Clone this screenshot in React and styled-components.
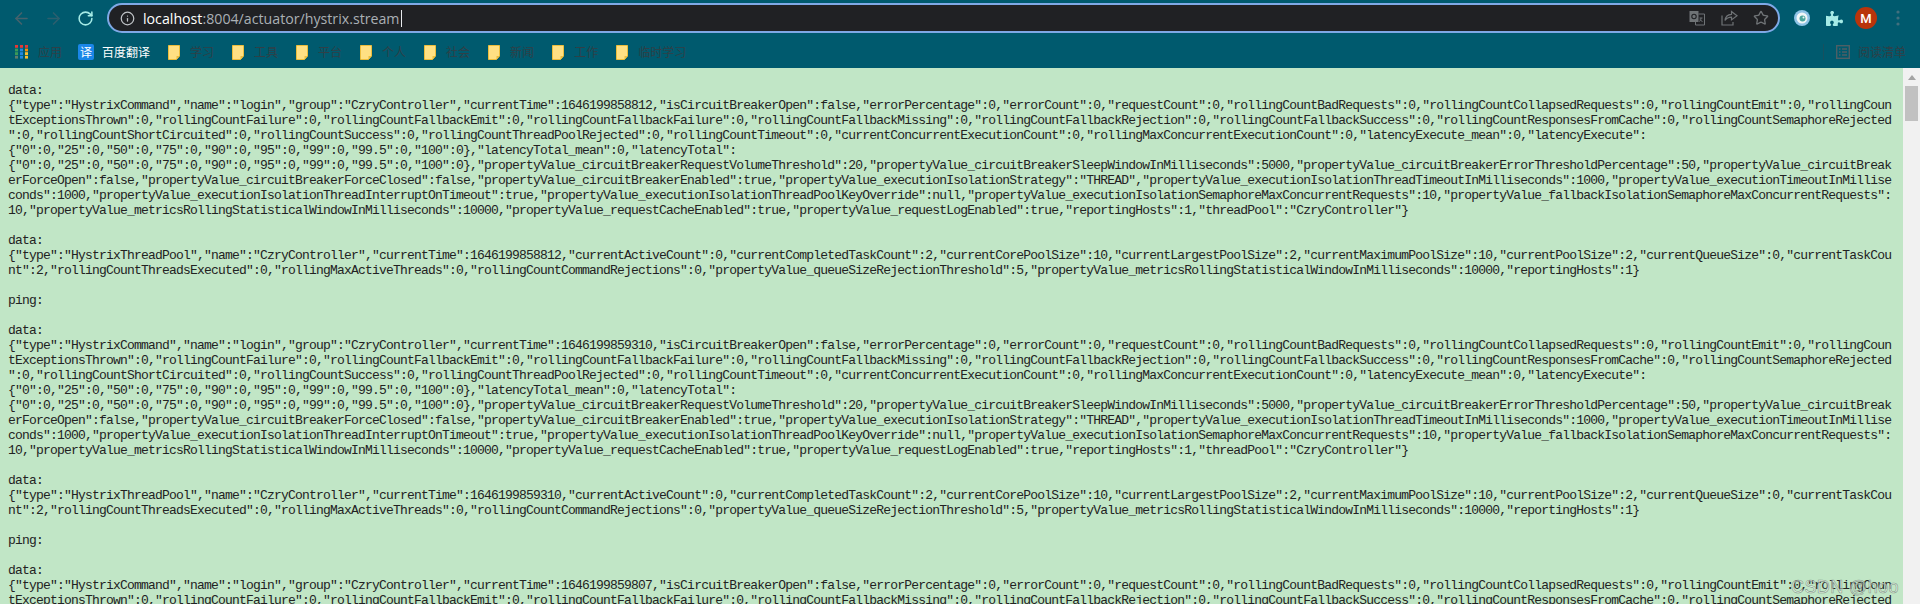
import styled, { createGlobalStyle } from 'styled-components';
import { ArrowLeft, ArrowRight, RotateCw, Info, Star } from 'lucide-react';
import { FaPuzzlePiece } from 'react-icons/fa';

const GlobalStyle = createGlobalStyle`
  html, body {
    margin: 0;
    padding: 0;
    overflow: hidden;
    background: #c1e6c6;
  }
`;

const Page = styled.div`
  position: relative;
  display: flex;
  flex-direction: column;
  width: 1920px;
  height: 604px;
  overflow: hidden;
`;

const Toolbar = styled.header`
  display: flex;
  flex-direction: column;
  flex: none;
  height: 68px;
  background: #005a6e;
`;

const NavRow = styled.div`
  display: flex;
  align-items: center;
  height: 36px;
  padding-left: 5px;
`;

const NavButton = styled.div`
  display: flex;
  align-items: center;
  justify-content: center;
  flex: none;
  width: 32px;
  height: 32px;
  color: ${(p) => p.$color};
`;

const Omnibox = styled.div`
  display: flex;
  align-items: center;
  flex: none;
  box-sizing: border-box;
  width: 1673px;
  height: 30px;
  margin: 0 6px;
  padding: 0 8px 0 11px;
  border: 2px solid #7fa9e6;
  border-radius: 15px;
  background: #202124;
`;

const Url = styled.div`
  flex: 1;
  margin-left: 8px;
  font-family: 'Open Sans', sans-serif;
  font-size: 14.2px;
  color: #aab0b5;
  white-space: pre;
`;

const Host = styled.span`
  color: #fff;
`;

const Caret = styled.span`
  display: inline-block;
  width: 1px;
  height: 17px;
  margin-left: 1px;
  vertical-align: -3px;
  background: #e8eaed;
`;

const OmniActions = styled.div`
  display: flex;
  align-items: center;
  gap: 14px;
  color: #6f7376;
`;

const OmniAction = styled.div`
  display: flex;
  align-items: center;
  justify-content: center;
  width: 18px;
  height: 18px;
`;

const Avatar = styled.div`
  display: flex;
  align-items: center;
  justify-content: center;
  width: 22px;
  height: 22px;
  border-radius: 50%;
  background: #b9340b;
  color: #fff;
  font-family: 'Roboto', sans-serif;
  font-size: 13px;
  font-weight: 500;
`;

const BookmarkRow = styled.div`
  display: flex;
  align-items: center;
  gap: 18px;
  height: 32px;
  padding: 0 14px 0 15px;
`;

const Bookmark = styled.div`
  display: flex;
  align-items: center;
  gap: ${(p) => p.$gap || 10}px;
  margin-right: ${(p) => p.$pull || 0}px;
`;

const BookmarkLabel = styled.span`
  font-family: 'Noto Sans CJK SC', sans-serif;
  font-size: 12px;
  line-height: 16px;
  color: ${(p) => (p.$light ? '#fff' : '#2f4047')};
`;

const TranslateBadge = styled.div`
  display: flex;
  align-items: center;
  justify-content: center;
  width: 16px;
  height: 16px;
  border-radius: 2px;
  background: #1a86e8;
  color: #fff;
  font-family: 'Noto Sans CJK SC', sans-serif;
  font-size: 12px;
  line-height: 16px;
`;

const ReadingList = styled.div`
  display: flex;
  align-items: center;
  gap: 8px;
  height: 16px;
  margin-left: auto;
  padding-left: 12px;
  border-left: 1px solid #17505f;
`;

const Viewport = styled.main`
  display: flex;
  flex: 1;
  min-height: 0;
`;

const Stream = styled.div`
  flex: 1;
  min-width: 0;
  padding: 15px 0 0 8px;
  overflow: hidden;
  background: #c1e6c6;
`;

const Line = styled.div`
  height: 15px;
  font-family: 'Liberation Mono', monospace;
  font-size: 13px;
  line-height: 15px;
  letter-spacing: -0.8px;
  color: #222;
  white-space: pre;
`;

const Scrollbar = styled.aside`
  display: flex;
  flex-direction: column;
  align-items: center;
  flex: none;
  width: 17px;
  background: #f1f1f1;
`;

const ScrollArrow = styled.div`
  width: 0;
  height: 0;
  margin: 7px 0 6px;
  border-left: 4px solid transparent;
  border-right: 4px solid transparent;
  border-bottom: 5px solid #a3a3a3;
`;

const ScrollThumb = styled.div`
  width: 13px;
  height: 35px;
  background: #c1c1c1;
`;

const Watermark = styled.div`
  position: absolute;
  left: 1791px;
  top: 576px;
  font-family: 'Liberation Sans', sans-serif;
  font-size: 18px;
  line-height: 22px;
  letter-spacing: 0.4px;
  color: rgba(240, 248, 240, 0.6);
  -webkit-text-stroke: 0.6px rgba(100, 115, 105, 0.7);
  white-space: pre;
`;

const ExtensionIcon = () => (
  <svg width="18" height="18" viewBox="0 0 18 18">
    <circle cx="9" cy="9" r="8" fill="#8ec3e6" />
    <circle cx="9" cy="9" r="5.5" fill="#f1f6f7" />
    <circle cx="9.5" cy="9.5" r="3" fill="#4ba59b" />
    <circle cx="10.5" cy="8.5" r="1" fill="#f1f6f7" />
  </svg>
);

const MoreIcon = () => (
  <svg width="4" height="16" viewBox="0 0 4 16" fill="#41707e">
    <circle cx="2" cy="2" r="1.6" />
    <circle cx="2" cy="8" r="1.6" />
    <circle cx="2" cy="14" r="1.6" />
  </svg>
);

const PageTranslateIcon = () => (
  <svg width="16" height="16" viewBox="0 0 16 16">
    <rect x="0.5" y="1" width="9" height="11" fill="#6f7376" />
    <path d="M9.5 4h6v11h-9v-3" fill="none" stroke="#6f7376" />
    <circle cx="5" cy="6.5" r="2.2" fill="none" stroke="#202124" strokeWidth="1.1" />
    <path d="M10.5 8h3M12 8c0 2-1 3-1.800 3.600M11 9.500c.6 1 1.500 1.700 2.500 2" fill="none" stroke="#6f7376" />
  </svg>
);

const ShareIcon = () => (
  <svg width="17" height="16" viewBox="0 0 17 16" fill="none" stroke="#6f7376" strokeWidth="1.200">
    <path d="M1 5.500v9.500h11v-3" />
    <path d="M10.500 1.500l5.500 4.200-5.500 4.200v-2.700c-3 0-5 1-6.500 3.300.4-3.600 2.800-6 6.500-6.200z" />
  </svg>
);

const AppsIcon = () => {
  const rows = [
    ['#e53935', '#e53935', '#e53935'],
    ['#3a9a58', '#1e88e5', '#fb8c00'],
    ['#3a9a58', '#1e88e5', '#fbc02d'],
    ['#607d6b', '#1e88e5', '#fbc02d'],
  ];
  return (
    <svg width="13" height="14" viewBox="0 0 13 14">
      {rows.map((row, y) =>
        row.map((fill, x) => (
          <rect key={`${x}-${y}`} x={x * 5} y={y * 3.6} width="3" height="2.800" fill={fill} />
        )),
      )}
    </svg>
  );
};

const FolderIcon = () => (
  <svg width="12" height="15" viewBox="0 0 12 15">
    <path d="M.5.500h11v10.500l-3 3.500h-8z" fill="#ffe083" stroke="#edbd3c" />
    <path d="M8.500 14.500v-3.500h3z" fill="#edbd3c" />
  </svg>
);

const ReadingIcon = () => (
  <svg width="14" height="14" viewBox="0 0 14 14" fill="none" stroke="#4d5f65" strokeWidth="1.400">
    <rect x="0.700" y="0.700" width="12.600" height="12.600" />
    <path d="M3 4h1.500M6 4h5M3 7h1.500M6 7h5M3 10h1.500M6 10h5" />
  </svg>
);

const commandLines = (time) => [
  'data:',
  `{"type":"HystrixCommand","name":"login","group":"CzryController","currentTime":${time},"isCircuitBreakerOpen":false,"errorPercentage":0,"errorCount":0,"requestCount":0,"rollingCountBadRequests":0,"rollingCountCollapsedRequests":0,"rollingCountEmit":0,"rollingCoun`,
  'tExceptionsThrown":0,"rollingCountFailure":0,"rollingCountFallbackEmit":0,"rollingCountFallbackFailure":0,"rollingCountFallbackMissing":0,"rollingCountFallbackRejection":0,"rollingCountFallbackSuccess":0,"rollingCountResponsesFromCache":0,"rollingCountSemaphoreRejected',
  '":0,"rollingCountShortCircuited":0,"rollingCountSuccess":0,"rollingCountThreadPoolRejected":0,"rollingCountTimeout":0,"currentConcurrentExecutionCount":0,"rollingMaxConcurrentExecutionCount":0,"latencyExecute_mean":0,"latencyExecute":',
  '{"0":0,"25":0,"50":0,"75":0,"90":0,"95":0,"99":0,"99.5":0,"100":0},"latencyTotal_mean":0,"latencyTotal":',
  '{"0":0,"25":0,"50":0,"75":0,"90":0,"95":0,"99":0,"99.5":0,"100":0},"propertyValue_circuitBreakerRequestVolumeThreshold":20,"propertyValue_circuitBreakerSleepWindowInMilliseconds":5000,"propertyValue_circuitBreakerErrorThresholdPercentage":50,"propertyValue_circuitBreak',
  'erForceOpen":false,"propertyValue_circuitBreakerForceClosed":false,"propertyValue_circuitBreakerEnabled":true,"propertyValue_executionIsolationStrategy":"THREAD","propertyValue_executionIsolationThreadTimeoutInMilliseconds":1000,"propertyValue_executionTimeoutInMillise',
  'conds":1000,"propertyValue_executionIsolationThreadInterruptOnTimeout":true,"propertyValue_executionIsolationThreadPoolKeyOverride":null,"propertyValue_executionIsolationSemaphoreMaxConcurrentRequests":10,"propertyValue_fallbackIsolationSemaphoreMaxConcurrentRequests":',
  '10,"propertyValue_metricsRollingStatisticalWindowInMilliseconds":10000,"propertyValue_requestCacheEnabled":true,"propertyValue_requestLogEnabled":true,"reportingHosts":1,"threadPool":"CzryController"}',
  '',
];

const poolLines = (time) => [
  'data:',
  `{"type":"HystrixThreadPool","name":"CzryController","currentTime":${time},"currentActiveCount":0,"currentCompletedTaskCount":2,"currentCorePoolSize":10,"currentLargestPoolSize":2,"currentMaximumPoolSize":10,"currentPoolSize":2,"currentQueueSize":0,"currentTaskCou`,
  'nt":2,"rollingCountThreadsExecuted":0,"rollingMaxActiveThreads":0,"rollingCountCommandRejections":0,"propertyValue_queueSizeRejectionThreshold":5,"propertyValue_metricsRollingStatisticalWindowInMilliseconds":10000,"reportingHosts":1}',
  '',
];

const pingLines = ['ping:', ''];

const streamLines = [
  ...commandLines(1646199858812),
  ...poolLines(1646199858812),
  ...pingLines,
  ...commandLines(1646199859310),
  ...poolLines(1646199859310),
  ...pingLines,
  ...commandLines(1646199859807),
];

const folders = ['学习', '工具', '平台', '个人', '社会', '新闻', '工作', '临时学习'];

const App = () => (
  <Page>
    <GlobalStyle />
    <Toolbar>
      <NavRow>
        <NavButton $color="#45626c">
          <ArrowLeft size={19} strokeWidth={2} />
        </NavButton>
        <NavButton $color="#2c5f6e">
          <ArrowRight size={19} strokeWidth={2} />
        </NavButton>
        <NavButton $color="#a5ebe6">
          <RotateCw size={17} strokeWidth={2.2} />
        </NavButton>
        <Omnibox>
          <Info size={15} color="#c0c4c8" />
          <Url>
            <Host>localhost</Host>:8004/actuator/hystrix.stream
            <Caret />
          </Url>
          <OmniActions>
            <OmniAction>
              <PageTranslateIcon />
            </OmniAction>
            <OmniAction>
              <ShareIcon />
            </OmniAction>
            <OmniAction>
              <Star size={16} strokeWidth={2} />
            </OmniAction>
          </OmniActions>
        </Omnibox>
        <NavButton>
          <ExtensionIcon />
        </NavButton>
        <NavButton $color="#a5ebe6">
          <FaPuzzlePiece size={17} />
        </NavButton>
        <NavButton>
          <Avatar>M</Avatar>
        </NavButton>
        <NavButton>
          <MoreIcon />
        </NavButton>
      </NavRow>
      <BookmarkRow>
        <Bookmark $pull={-2}>
          <AppsIcon />
          <BookmarkLabel>应用</BookmarkLabel>
        </Bookmark>
        <Bookmark $gap={8}>
          <TranslateBadge>译</TranslateBadge>
          <BookmarkLabel $light>百度翻译</BookmarkLabel>
        </Bookmark>
        {folders.map((name) => (
          <Bookmark key={name}>
            <FolderIcon />
            <BookmarkLabel>{name}</BookmarkLabel>
          </Bookmark>
        ))}
        <ReadingList>
          <ReadingIcon />
          <BookmarkLabel>阅读清单</BookmarkLabel>
        </ReadingList>
      </BookmarkRow>
    </Toolbar>
    <Viewport>
      <Stream>
        {streamLines.map((line, i) => (
          <Line key={i}>{line}</Line>
        ))}
      </Stream>
      <Scrollbar>
        <ScrollArrow />
        <ScrollThumb />
      </Scrollbar>
    </Viewport>
    <Watermark>CSDN @hoo</Watermark>
  </Page>
);

export default App;
